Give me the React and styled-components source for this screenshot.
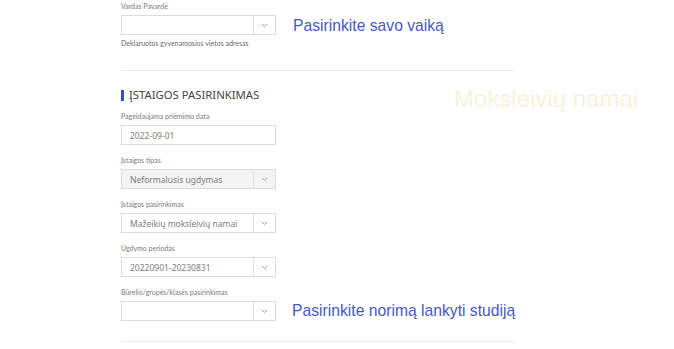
import styled, { createGlobalStyle } from 'styled-components'

const Global = createGlobalStyle`
body{
  margin: 0;
  background: #fff;
  font-family: "Lato", "Noto Sans", sans-serif;
}
`

const Page = styled.div`
width: 674px;
height: 349px;
overflow: hidden;
padding-left: 121px;
box-sizing: border-box;
`
const Row = styled.div`
display: flex;
align-items: flex-end;
gap: ${({gap})=>gap || 16}px;
`
const Field = styled.div`
width: 155px;
display: flex;
flex-direction: column;
margin-top: ${({top})=>top || 0}px;
`
const Label = styled.div`
font-size: 7px;
line-height: 10px;
color: #7a7a7a;
margin-bottom: 4px;
white-space: nowrap;
`
const Note = styled.div`
font-size: 7px;
line-height: 10px;
color: #6a6a6a;
margin-top: 3px;
`
const Box = styled.div`
height: 20px;
box-sizing: border-box;
border: 1px solid #dcdcdc;
background: ${({grey})=>grey ? '#f3f3f3' : '#fff'};
display: flex;
align-items: center;
font-family: "Noto Sans", sans-serif;
font-size: 8.5px;
color: #7d7d7d;
`
const Value = styled.div`
flex: 1;
padding-left: 8px;
`
const Arrow = styled.div`
width: 21px;
height: 100%;
border-left: 1px solid #e2e2e2;
display: flex;
align-items: center;
justify-content: center;
`
const Hint = styled.div`
font-family: "Liberation Sans", Arial, sans-serif;
font-size: 15.7px;
line-height: 18px;
color: #4658c8;
white-space: nowrap;
margin-bottom: ${({bottom})=>bottom || 0}px;
`
const Divider = styled.div`
width: 394px;
height: 1px;
background: #ececec;
margin-top: ${({top})=>top}px;
`
const HeadRow = styled.div`
display: flex;
align-items: flex-start;
height: 12px;
margin-top: 18px;
`
const Heading = styled.div`
width: 333px;
display: flex;
align-items: center;
font-family: "Noto Sans", sans-serif;
font-size: 11.3px;
line-height: 12px;
color: #444;
text-transform: uppercase;
&::before{
  content: '';
  width: 3px;
  height: 11px;
  background: #2b55b8;
  margin-right: 5px;
}
`
const Ghost = styled.div`
font-family: "Liberation Sans", Arial, sans-serif;
font-size: 24px;
line-height: 12px;
color: #f6f2dc;
margin-top: 4px;
white-space: nowrap;
`

const Chevron = () => (
  <svg width="7" height="5" viewBox="0 0 7 5">
    <path d="M1 1l2.5 2.5L6 1" fill="none" stroke="#999" strokeWidth="1"/>
  </svg>
)

const Select = ({value, grey}) => (
  <Box grey={grey}>
    <Value>{value}</Value>
    <Arrow><Chevron/></Arrow>
  </Box>
)

const App = () => {
  return (
    <>
    <Global/>
    <Page>
      <Row gap={17}>
        <Field top={1}>
          <Label>Vardas Pavardė</Label>
          <Select/>
        </Field>
        <Hint>Pasirinkite savo vaiką</Hint>
      </Row>
      <Note>Deklaruotos gyvenamosios vietos adresas</Note>
      <Divider top={22}/>
      <HeadRow>
        <Heading>Įstaigos pasirinkimas</Heading>
        <Ghost>Moksleivių namai</Ghost>
      </HeadRow>
      <Field top={10}>
        <Label>Pageidaujama priėmimo data</Label>
        <Box><Value>2022-09-01</Value></Box>
      </Field>
      <Field top={10}>
        <Label>Įstaigos tipas</Label>
        <Select grey value="Neformalusis ugdymas"/>
      </Field>
      <Field top={10}>
        <Label>Įstaigos pasirinkimas</Label>
        <Select value="Mažeikių moksleivių namai"/>
      </Field>
      <Field top={10}>
        <Label>Ugdymo periodas</Label>
        <Select value="20220901-20230831"/>
      </Field>
      <Row gap={16}>
        <Field top={10}>
          <Label>Būrelio/grupės/klasės pasirinkimas</Label>
          <Select/>
        </Field>
        <Hint bottom={1}>Pasirinkite norimą lankyti studiją</Hint>
      </Row>
      <Divider top={20}/>
    </Page>
    </>
  )
}
export default App;
